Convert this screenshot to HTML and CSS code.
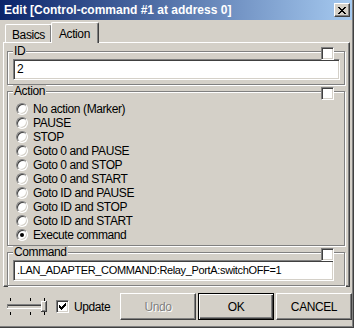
FILE: index.html
```html
<!DOCTYPE html>
<html lang="en">
<head>
    <meta charset="UTF-8">
    <title>Edit Control-command</title>
    <link rel="stylesheet" href="styles.css">
</head>
<body>
    <div class="window">
        <div class="titlebar">
            <span class="title">Edit [Control-command #1 at address 0]</span>
            <button class="close-btn">
                <svg width="8" height="7" viewBox="0 0 8 7" shape-rendering="crispEdges">
                    <path d="M0 0h2v1h-2zM6 0h2v1h-2zM1 1h2v1h-2zM5 1h2v1h-2zM2 2h4v1h-4zM3 3h2v1h-2zM2 4h4v1h-4zM1 5h2v1h-2zM5 5h2v1h-2zM0 6h2v1h-2zM6 6h2v1h-2z" fill="#000"/>
                </svg>
            </button>
        </div>

        <div class="tabs">
            <div class="tab">Basics</div>
            <div class="tab active">Action</div>
        </div>

        <div class="panel">
            <div class="group group-id">
                <span class="group-label">ID</span>
                <span class="box group-check"></span>
                <div class="edit">2</div>
            </div>

            <div class="group group-action">
                <span class="group-label">Action</span>
                <span class="box group-check"></span>
                <div class="radio-list">
                    <label class="radio-row"><span class="radio"></span>No action (Marker)</label>
                    <label class="radio-row"><span class="radio"></span>PAUSE</label>
                    <label class="radio-row"><span class="radio"></span>STOP</label>
                    <label class="radio-row"><span class="radio"></span>Goto 0 and PAUSE</label>
                    <label class="radio-row"><span class="radio"></span>Goto 0 and STOP</label>
                    <label class="radio-row"><span class="radio"></span>Goto 0 and START</label>
                    <label class="radio-row"><span class="radio"></span>Goto ID and PAUSE</label>
                    <label class="radio-row"><span class="radio"></span>Goto ID and STOP</label>
                    <label class="radio-row"><span class="radio"></span>Goto ID and START</label>
                    <label class="radio-row"><span class="radio checked"></span>Execute command</label>
                </div>
            </div>

            <div class="group group-command">
                <span class="group-label">Command</span>
                <span class="box group-check"></span>
                <div class="edit">.LAN_ADAPTER_COMMAND:Relay_PortA:switchOFF=1</div>
            </div>
        </div>

        <div class="footer">
            <svg class="slider" width="40" height="20" viewBox="0 0 40 20" shape-rendering="crispEdges">
                <!-- ticks -->
                <rect x="3" y="1" width="1" height="3" fill="#000"/>
                <rect x="23" y="1" width="1" height="3" fill="#000"/>
                <rect x="37" y="1" width="1" height="3" fill="#000"/>
                <rect x="3" y="15" width="1" height="3" fill="#000"/>
                <rect x="23" y="15" width="1" height="3" fill="#000"/>
                <rect x="37" y="15" width="1" height="3" fill="#000"/>
                <!-- track -->
                <rect x="0" y="7" width="38" height="1" fill="#808080"/>
                <rect x="0" y="7" width="1" height="4" fill="#808080"/>
                <rect x="1" y="8" width="36" height="1" fill="#404040"/>
                <rect x="0" y="11" width="38" height="1" fill="#fff"/>
                <rect x="37" y="7" width="1" height="5" fill="#fff"/>
                <!-- thumb -->
                <rect x="34" y="4" width="6" height="11" fill="#D4D0C8"/>
                <rect x="34" y="4" width="5" height="1" fill="#fff"/>
                <rect x="34" y="4" width="1" height="10" fill="#fff"/>
                <rect x="39" y="4" width="1" height="11" fill="#404040"/>
                <rect x="34" y="14" width="6" height="1" fill="#404040"/>
                <rect x="38" y="5" width="1" height="9" fill="#808080"/>
                <rect x="35" y="13" width="4" height="1" fill="#808080"/>
            </svg>
            <label class="update">
                <span class="box">
                    <svg width="7" height="7" viewBox="0 0 7 7" shape-rendering="crispEdges">
                        <path d="M6 0h1v3h-1zM5 1h1v3h-1zM4 2h1v3h-1zM3 3h1v3h-1zM2 4h1v3h-1zM1 3h1v3h-1zM0 2h1v3h-1z" fill="#000"/>
                    </svg>
                </span>
                Update
            </label>
            <div class="buttons">
                <button class="btn disabled">Undo</button>
                <button class="btn default">OK</button>
                <button class="btn">CANCEL</button>
            </div>
        </div>
    </div>
</body>
</html>
```

FILE: styles.css
```css
:root {
    --face: #D4D0C8;
    --shadow: #808080;
    --dark: #404040;
}

* {
    box-sizing: border-box;
}

body {
    margin: 0;
    background: var(--face);
    font-family: "Liberation Sans", Arial, sans-serif;
    font-size: 11px;
    letter-spacing: -0.4px;
    color: #000;
}

.window {
    width: 354px;
    height: 328px;
    background: var(--face);
    border-right: 1px solid var(--dark);
    border-bottom: 1px solid var(--dark);
    box-shadow: inset -1px -1px var(--shadow);
    padding: 0 1px 1px 0;
    display: flex;
    flex-direction: column;
}

.titlebar {
    height: 20px;
    background: linear-gradient(to right, #0A246A, #A6CAF0);
    display: flex;
    align-items: center;
    justify-content: space-between;
    padding: 0 2px 0 4px;
}

.title {
    color: #fff;
    font-weight: bold;
    font-size: 12px;
    letter-spacing: 0;
    white-space: nowrap;
}

.close-btn {
    width: 16px;
    height: 14px;
    padding: 0;
    background: var(--face);
    border: 1px solid;
    border-color: #fff var(--dark) var(--dark) #fff;
    box-shadow: inset -1px -1px var(--shadow);
    display: flex;
    align-items: center;
    justify-content: center;
}

/* tabs */
.tabs {
    height: 22px;
    display: flex;
    align-items: flex-end;
    padding-left: 5px;
}

.tab {
    height: 18px;
    padding: 3px 6px 0 6px;
    border-top: 1px solid #fff;
    border-left: 1px solid #fff;
    border-right: 1px solid var(--dark);
    border-radius: 2px 2px 0 0;
    box-shadow: inset -1px 0 var(--shadow);
    background: var(--face);
    font-size: 12px;
}

.tab.active {
    height: 21px;
    padding: 4px 8px 0 7px;
    margin: 0 0 -1px -1px;
    position: relative;
    z-index: 1;
}

.panel {
    flex: 1;
    margin-left: 3px;
    width: 347px;
    border: 1px solid;
    border-color: #fff var(--dark) var(--dark) #fff;
    box-shadow: inset -1px -1px var(--shadow);
    padding: 8px 4px 0 3px;
    display: flex;
    flex-direction: column;
    gap: 6px;
}

/* group boxes */
.group {
    position: relative;
    border: 1px solid var(--shadow);
    box-shadow: inset 1px 1px #fff, 1px 1px #fff;
    padding: 7px 4px 4px 5px;
}

.group-label {
    position: absolute;
    top: -7px;
    left: 5px;
    padding: 0 1px;
    background: var(--face);
    line-height: 13px;
    font-size: 12px;
}

.box {
    width: 13px;
    height: 13px;
    background: #fff;
    border: 1px solid;
    border-color: var(--shadow) #fff #fff var(--shadow);
    box-shadow: inset 1px 1px var(--dark), inset -1px -1px var(--face);
    display: flex;
    align-items: center;
    justify-content: center;
}

.group-check {
    position: absolute;
    top: -5px;
    right: 10px;
}

.edit {
    height: 21px;
    background: #fff;
    border: 1px solid;
    border-color: var(--shadow) #fff #fff var(--shadow);
    box-shadow: inset 1px 1px var(--dark), inset -1px -1px var(--face);
    padding: 0 3px;
    line-height: 19px;
    font-size: 12px;
    white-space: nowrap;
}

.group-action {
    padding: 10px 4px 3px 8px;
}

.group-command .edit {
    margin-right: 6px;
    font-size: 11px;
    letter-spacing: -0.35px;
}

.radio-row {
    height: 14px;
    display: flex;
    align-items: center;
    gap: 5px;
    font-size: 12px;
}

.radio {
    width: 12px;
    height: 12px;
    border-radius: 50%;
    background: #fff;
    border: 1px solid;
    border-color: var(--shadow) #fff #fff var(--shadow);
    box-shadow: inset 1px 1px var(--dark), inset -1px -1px var(--face);
    display: flex;
    align-items: center;
    justify-content: center;
}

.radio.checked::after {
    content: '';
    width: 4px;
    height: 4px;
    border-radius: 50%;
    background: #000;
}

/* footer */
.footer {
    flex: 1;
    display: flex;
    align-items: center;
    padding: 2px 0 2px 7px;
}

.slider {
    display: block;
}

.update {
    display: flex;
    align-items: center;
    gap: 5px;
    margin-left: 9px;
    font-size: 12px;
}

.buttons {
    margin-left: auto;
    display: flex;
    gap: 2px;
}

.btn {
    width: 76px;
    height: 27px;
    padding: 0;
    font-family: inherit;
    font-size: 12px;
    letter-spacing: -0.4px;
    background: var(--face);
    border: 1px solid;
    border-color: #fff var(--dark) var(--dark) #fff;
    box-shadow: inset -1px -1px var(--shadow);
    color: #000;
}

.btn.disabled {
    color: var(--shadow);
    text-shadow: 1px 1px #fff;
}

.btn.default {
    border: 1px solid #000;
    box-shadow: inset 1px 1px #fff, inset -1px -1px var(--dark), inset -2px -2px var(--shadow);
}
```
